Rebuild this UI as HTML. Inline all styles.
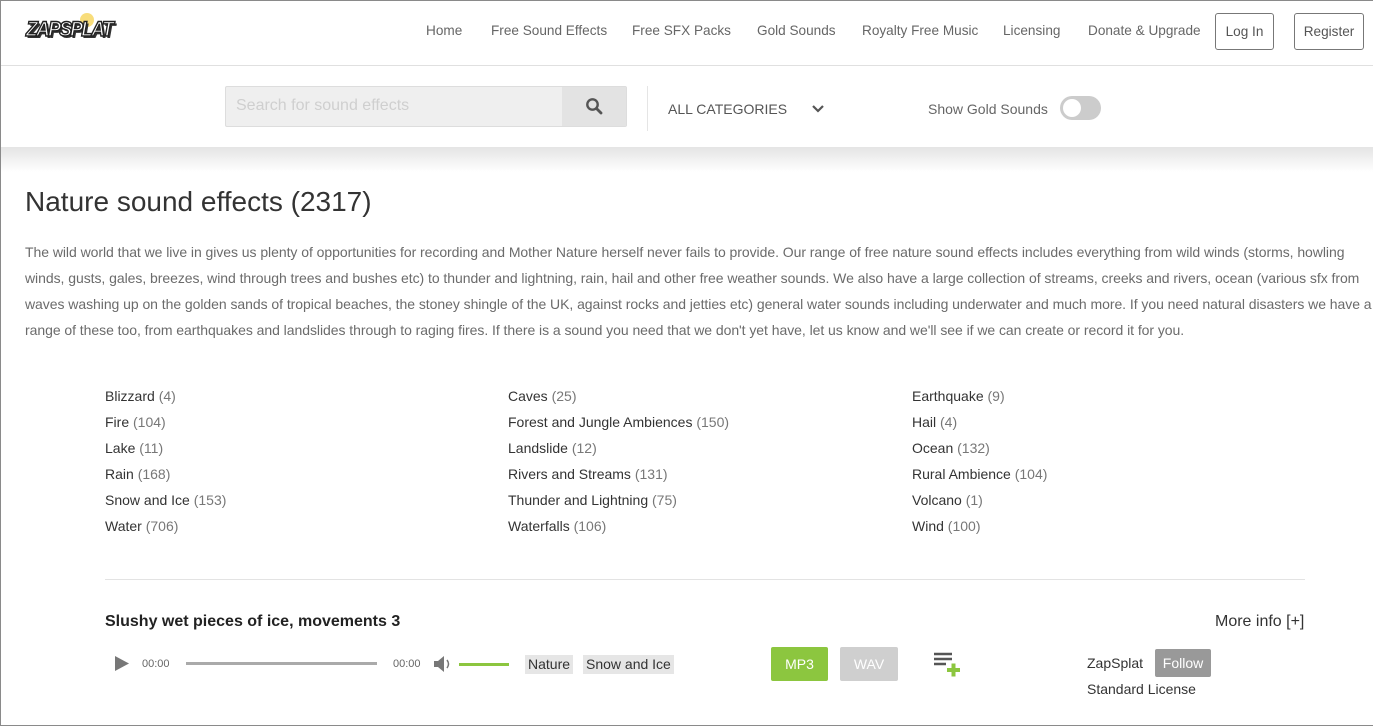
<!DOCTYPE html>
<html><head><meta charset="utf-8"><style>
*{margin:0;padding:0;box-sizing:border-box}
body{width:1373px;height:726px;overflow:hidden;background:#fff;font-family:"Liberation Sans",sans-serif;position:relative}
.a{position:absolute;white-space:nowrap}
.nav{font-size:13.6px;color:#666;top:23px}
.btn{border:1px solid #777;border-radius:3px;font-size:13.6px;color:#555;top:13px;height:37px;line-height:35px;text-align:center}
.p{font-size:14px;color:#6b6b6b;line-height:26px;left:25px;top:239px;white-space:nowrap;letter-spacing:-0.05px}
.cat{font-size:14px;color:#333}
.cat span{color:#777}
.tag{background:#e6e6e6;font-size:14px;color:#333;height:19px;line-height:19px;padding:0 3px;top:655px}
</style></head><body>
<div class="a" style="left:0;top:0;width:1373px;height:66px;border-bottom:1px solid #e0e0e0"></div>
<div class="a" style="left:80px;top:13px;width:14px;height:14px;border-radius:50%;background:#f3c623;opacity:.6"></div>
<div class="a" style="left:26px;top:18px;font:italic 900 21px 'Liberation Sans',sans-serif;color:#fff;-webkit-text-stroke:1.5px #222;letter-spacing:-2px;text-shadow:2px 2px 0 #333;transform:scaleX(0.92);transform-origin:left">ZAPSPLAT</div>
<div class="a nav" style="left:426px">Home</div>
<div class="a nav" style="left:491px">Free Sound Effects</div>
<div class="a nav" style="left:632px">Free SFX Packs</div>
<div class="a nav" style="left:757px">Gold Sounds</div>
<div class="a nav" style="left:862px">Royalty Free Music</div>
<div class="a nav" style="left:1003px">Licensing</div>
<div class="a nav" style="left:1088px">Donate &amp; Upgrade</div>
<div class="a btn" style="left:1215px;width:59px">Log In</div>
<div class="a btn" style="left:1294px;width:70px">Register</div>
<div class="a" style="left:0;top:147px;width:1373px;height:25px;background:linear-gradient(#e4e4e4,#fff)"></div>
<div class="a" style="left:225px;top:86px;width:402px;height:41px;background:#efefef;border:1px solid #ddd;border-radius:2px"></div>
<div class="a" style="left:562px;top:87px;width:64px;height:39px;background:#e3e3e3"></div>
<div class="a" style="left:236px;top:97px;font-size:16px;color:#cfcfcf">Search for sound effects</div>
<svg class="a" style="left:585px;top:97px" width="18" height="18" viewBox="0 0 18 18"><circle cx="7.5" cy="7.5" r="5.2" fill="none" stroke="#555" stroke-width="2.4"/><path d="M11.5 11.5L16 16" stroke="#555" stroke-width="2.8" stroke-linecap="round"/></svg>
<div class="a" style="left:647px;top:86px;width:1px;height:45px;background:#e5e5e5"></div>
<div class="a" style="left:668px;top:101px;font-size:14px;color:#555">ALL CATEGORIES</div>
<svg class="a" style="left:811px;top:104px" width="14" height="10"><path d="M2 2l5 5 5-5" fill="none" stroke="#555" stroke-width="2.2"/></svg>
<div class="a" style="left:928px;top:101px;font-size:14px;color:#666">Show Gold Sounds</div>
<div class="a" style="left:1060px;top:96px;width:41px;height:24px;border-radius:12px;background:#ccc"></div>
<div class="a" style="left:1063px;top:99px;width:18px;height:18px;border-radius:50%;background:#fff"></div>
<div class="a" style="left:25px;top:186px;font-size:28px;color:#333">Nature sound effects (2317)</div>
<div class="a p">The wild world that we live in gives us plenty of opportunities for recording and Mother Nature herself never fails to provide. Our range of free nature sound effects includes everything from wild winds (storms, howling<br>winds, gusts, gales, breezes, wind through trees and bushes etc) to thunder and lightning, rain, hail and other free weather sounds. We also have a large collection of streams, creeks and rivers, ocean (various sfx from<br>waves washing up on the golden sands of tropical beaches, the stoney shingle of the UK, against rocks and jetties etc) general water sounds including underwater and much more. If you need natural disasters we have a<br>range of these too, from earthquakes and landslides through to raging fires. If there is a sound you need that we don't yet have, let us know and we'll see if we can create or record it for you.</div>
<div class="a cat" style="left:105px;top:383px;line-height:26px">Blizzard <span>(4)</span><br>Fire <span>(104)</span><br>Lake <span>(11)</span><br>Rain <span>(168)</span><br>Snow and Ice <span>(153)</span><br>Water <span>(706)</span></div>
<div class="a cat" style="left:508px;top:383px;line-height:26px">Caves <span>(25)</span><br>Forest and Jungle Ambiences <span>(150)</span><br>Landslide <span>(12)</span><br>Rivers and Streams <span>(131)</span><br>Thunder and Lightning <span>(75)</span><br>Waterfalls <span>(106)</span></div>
<div class="a cat" style="left:912px;top:383px;line-height:26px">Earthquake <span>(9)</span><br>Hail <span>(4)</span><br>Ocean <span>(132)</span><br>Rural Ambience <span>(104)</span><br>Volcano <span>(1)</span><br>Wind <span>(100)</span></div>
<div class="a" style="left:105px;top:579px;width:1200px;height:1px;background:#e3e3e3"></div>
<div class="a" style="left:105px;top:613px;font-size:16px;font-weight:bold;color:#222">Slushy wet pieces of ice, movements 3</div>
<div class="a" style="left:1215px;top:613px;font-size:16px;color:#333">More info [+]</div>
<svg class="a" style="left:114px;top:655px" width="16" height="17"><path d="M1 1L15 8.5L1 16Z" fill="#777"/></svg>
<div class="a" style="left:142px;top:658px;font-size:11px;color:#666">00:00</div>
<div class="a" style="left:186px;top:662px;width:191px;height:3px;background:#aaa"></div>
<div class="a" style="left:393px;top:658px;font-size:11px;color:#666">00:00</div>
<svg class="a" style="left:433px;top:655px" width="20" height="18"><path d="M1 6h4l6-5v16l-6-5H1z" fill="#777"/><path d="M14 5q3 4 0 8" fill="none" stroke="#777" stroke-width="1.5"/></svg>
<div class="a" style="left:459px;top:663px;width:50px;height:3px;background:#8cc63f"></div>
<div class="a tag" style="left:525px">Nature</div>
<div class="a tag" style="left:583px">Snow and Ice</div>
<div class="a" style="left:771px;top:647px;width:57px;height:34px;background:#8cc63f;color:#fff;font-size:14px;line-height:34px;text-align:center;border-radius:2px">MP3</div>
<div class="a" style="left:840px;top:647px;width:58px;height:34px;background:#cfcfcf;color:#fff;font-size:14px;line-height:34px;text-align:center;border-radius:2px">WAV</div>
<svg class="a" style="left:933px;top:652px" width="30" height="30"><path d="M1 2h18M1 7h18M1 12h12" stroke="#555" stroke-width="2.5"/><path d="M14 18h13M20.5 11.5v13" stroke="#8cc63f" stroke-width="4"/></svg>
<div class="a" style="left:1087px;top:655px;font-size:14px;color:#333">ZapSplat</div>
<div class="a" style="left:1155px;top:649px;width:56px;height:28px;background:#999;color:#fff;font-size:14px;line-height:28px;text-align:center;border-radius:2px">Follow</div>
<div class="a" style="left:1087px;top:681px;font-size:14px;color:#333">Standard License</div>
<div class="a" style="left:0;top:0;width:1373px;height:726px;border:1px solid #8a8a8a;border-right:none;pointer-events:none"></div>
</body></html>
